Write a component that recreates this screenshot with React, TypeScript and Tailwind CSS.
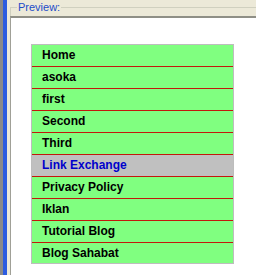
import React from "react";

const links = [
  "Home",
  "asoka",
  "first",
  "Second",
  "Third",
  "Link Exchange",
  "Privacy Policy",
  "Iklan",
  "Tutorial Blog",
  "Blog Sahabat",
];

// preview pane with a simple vertical link menu
export default function App() {
  return (
    <div className="flex w-[256px] h-[275px] overflow-hidden bg-[#ece9d8] font-['Liberation_Sans',Arial,sans-serif]">
      <div className="w-[3px] bg-[#8a8a8a]" />
      <div className="w-[4px] bg-[#2c5ce0]" />
      <div className="w-[3px] bg-[#ece9d8]" />
      <div className="flex-1 flex flex-col">
        {/* group box header */}
        <div className="relative h-[16px] shrink-0">
          <div className="absolute left-0 right-0 top-[7px] h-px bg-[#d0d0bf]" />
          <div className="absolute left-0 top-[7px] bottom-0 w-px bg-[#d0d0bf]" />
          <span className="absolute left-[7px] top-[1px] px-[1px] bg-[#ece9d8] text-[11px] leading-[13px] text-[#1c4cc8]">
            Preview:
          </span>
        </div>
        <div className="flex-1 bg-white border-t-2 border-l border-t-[#8f8f86] border-l-[#a0a097] pl-[20px] pt-[26px]">
          <ul className="w-[203px] border border-[#bdbdbd] bg-[#80ff80]">
            {links.map((name, idx) => {
              const active = name === "Link Exchange";
              const last = idx === links.length - 1;
              return (
                <li
                  key={name}
                  className={
                    (last ? "h-[20px] leading-[20px] " : "h-[22px] leading-[21px] border-b border-[#c2180c] ") +
                    (active ? "bg-[#c0c0c0] text-[#0000cc] " : "text-black ") +
                    "pl-[10px] text-[12px] font-bold"
                  }
                >
                  {name}
                </li>
              );
            })}
          </ul>
        </div>
      </div>
    </div>
  );
}
